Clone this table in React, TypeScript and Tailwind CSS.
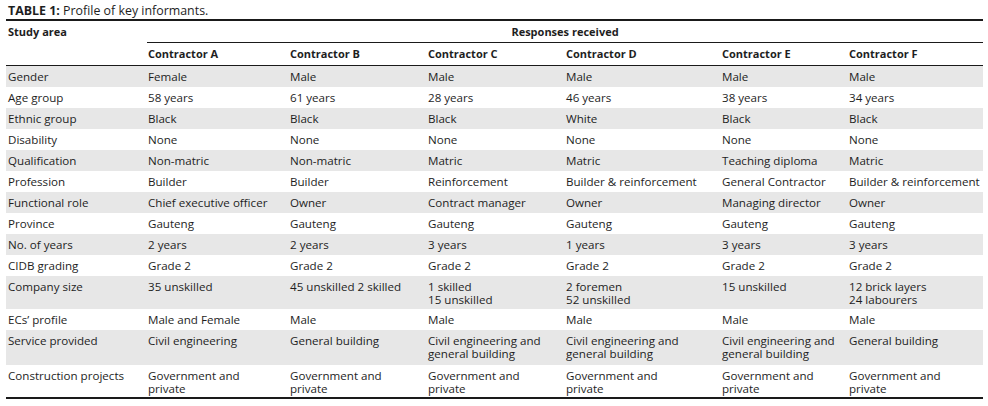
const columns = ["Contractor A", "Contractor B", "Contractor C", "Contractor D", "Contractor E", "Contractor F"];

const rows: { label: string; values: string[][]; pad?: string }[] = [
	{ label: "Gender", values: [["Female"], ["Male"], ["Male"], ["Male"], ["Male"], ["Male"]] },
	{ label: "Age group", values: [["58 years"], ["61 years"], ["28 years"], ["46 years"], ["38 years"], ["34 years"]] },
	{ label: "Ethnic group", values: [["Black"], ["Black"], ["Black"], ["White"], ["Black"], ["Black"]] },
	{ label: "Disability", values: [["None"], ["None"], ["None"], ["None"], ["None"], ["None"]] },
	{ label: "Qualification", values: [["Non-matric"], ["Non-matric"], ["Matric"], ["Matric"], ["Teaching diploma"], ["Matric"]] },
	{ label: "Profession", values: [["Builder"], ["Builder"], ["Reinforcement"], ["Builder & reinforcement"], ["General Contractor"], ["Builder & reinforcement"]] },
	{ label: "Functional role", values: [["Chief executive officer"], ["Owner"], ["Contract manager"], ["Owner"], ["Managing director"], ["Owner"]] },
	{ label: "Province", values: [["Gauteng"], ["Gauteng"], ["Gauteng"], ["Gauteng"], ["Gauteng"], ["Gauteng"]] },
	{ label: "No. of years", values: [["2 years"], ["2 years"], ["3 years"], ["1 years"], ["3 years"], ["3 years"]] },
	{ label: "CIDB grading", values: [["Grade 2"], ["Grade 2"], ["Grade 2"], ["Grade 2"], ["Grade 2"], ["Grade 2"]] },
	{ label: "Company size", pad: "pb-[3px]", values: [["35 unskilled"], ["45 unskilled 2 skilled"], ["1 skilled", "15 unskilled"], ["2 foremen", "52 unskilled"], ["15 unskilled"], ["12 brick layers", "24 labourers"]] },
	{ label: "ECs\u2019 profile", values: [["Male and Female"], ["Male"], ["Male"], ["Male"], ["Male"], ["Male"]] },
	{ label: "Service provided", pad: "pb-[5px]", values: [["Civil engineering"], ["General building"], ["Civil engineering and", "general building"], ["Civil engineering and", "general building"], ["Civil engineering and", "general building"], ["General building"]] },
	{ label: "Construction projects", pad: "pb-[2px]", values: [["Government and", "private"], ["Government and", "private"], ["Government and", "private"], ["Government and", "private"], ["Government and", "private"], ["Government and", "private"]] },
];

const grid = "grid grid-cols-[141px_142px_138px_138px_156px_127px_135px]";

export default function App() {
	return (
		<div className="w-[988px] h-[406px] bg-white pt-[4px] text-[#1e1e1e] text-[11.6px] leading-[13px]" style={{ fontFamily: "'Open Sans', Lato, sans-serif" }}>
			<p className="pl-[8px] text-[12.4px] leading-[14px]">
				<span className="font-bold">TABLE 1:</span> Profile of key informants.
			</p>

			<div className="ml-[6px] w-[977px] mt-[1px] border-t-2 border-[#1a1a1a]">
				{/* header */}
				<div className={`${grid} text-[11px] font-bold`}>
					<div className="row-span-2 pl-[2px] pt-[4px]">Study area</div>
					<div className="col-span-6 h-[22px] pt-[4px] text-center border-b border-[#1a1a1a]">
						Responses received
					</div>
					{columns.map((c) => (
						<div key={c} className="h-[22px] pl-[1px] pt-[4px]">{c}</div>
					))}
				</div>

				{/* body */}
				<div className="border-t border-b-2 border-t-[#1a1a1a] border-b-[#1a1a1a]">
					{rows.map((row, i) => (
						<div key={row.label} className={`${grid} ${i % 2 === 0 ? "bg-[#e7e7e7]" : "bg-white"} ${row.pad ?? "pb-[4px]"} pt-[4px]`}>
							<div className="pl-[2px]">{row.label}</div>
							{row.values.map((lines, j) => (
								<div key={j} className="pl-[1px]">
									{lines.map((l) => (
										<div key={l} className="whitespace-nowrap">{l}</div>
									))}
								</div>
							))}
						</div>
					))}
				</div>
			</div>
		</div>
	);
}
